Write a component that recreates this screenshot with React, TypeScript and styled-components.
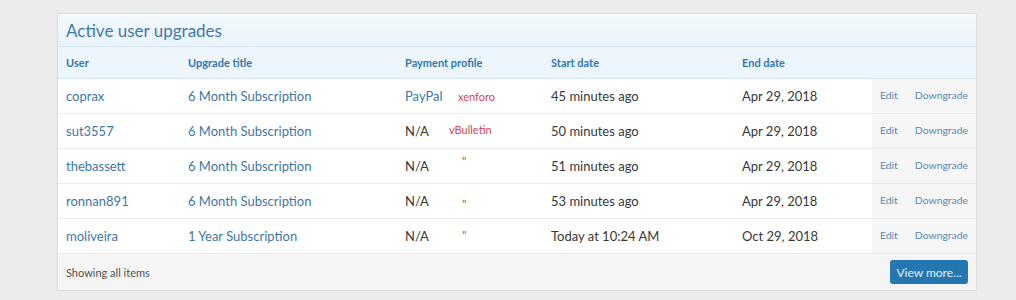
import React from 'react'
import styled, { createGlobalStyle } from 'styled-components'

const GlobalStyle = createGlobalStyle`
  html, body {
    margin: 0;
    padding: 0;
    background: #ececec;
    font-family: "Segoe UI", Lato, "Liberation Sans", sans-serif;
  }
`

type Note = { text: string; x: number; y: number; size?: number }

type Upgrade = {
  user: string
  title: string
  profile: string
  profileLink: boolean
  start: string
  end: string
  note: Note
}

const rows: Upgrade[] = [
  { user: 'coprax', title: '6 Month Subscription', profile: 'PayPal', profileLink: true, start: '45 minutes ago', end: 'Apr 29, 2018', note: { text: 'xenforo', x: 61, y: 12 } },
  { user: 'sut3557', title: '6 Month Subscription', profile: 'N/A', profileLink: false, start: '50 minutes ago', end: 'Apr 29, 2018', note: { text: 'vBulletin', x: 52, y: 10 } },
  { user: 'thebassett', title: '6 Month Subscription', profile: 'N/A', profileLink: false, start: '51 minutes ago', end: 'Apr 29, 2018', note: { text: '"', x: 65, y: 6, size: 12 } },
  { user: 'ronnan891', title: '6 Month Subscription', profile: 'N/A', profileLink: false, start: '53 minutes ago', end: 'Apr 29, 2018', note: { text: '"', x: 65, y: 14, size: 12 } },
  { user: 'moliveira', title: '1 Year Subscription', profile: 'N/A', profileLink: false, start: 'Today at 10:24 AM', end: 'Oct 29, 2018', note: { text: '"', x: 65, y: 10, size: 12 } },
]

const App: React.FC = () => {
  return (
    <>
      <GlobalStyle />
      <Page>
        <Panel>
          <PanelTitle>Active user upgrades</PanelTitle>
          <Table>
            <colgroup>
              <col style={{ width: 122 }} />
              <col style={{ width: 217 }} />
              <col style={{ width: 146 }} />
              <col style={{ width: 191 }} />
              <col style={{ width: 138 }} />
              <col />
            </colgroup>
            <thead>
              <tr>
                <Th>User</Th>
                <Th>Upgrade title</Th>
                <Th>Payment profile</Th>
                <Th>Start date</Th>
                <Th>End date</Th>
                <Th />
              </tr>
            </thead>
            <tbody>
              {rows.map((r) => (
                <Row key={r.user}>
                  <Td><Link>{r.user}</Link></Td>
                  <Td><Link>{r.title}</Link></Td>
                  <ProfileCell>
                    {r.profileLink ? <Link>{r.profile}</Link> : r.profile}
                    <Annotation $x={r.note.x} $y={r.note.y} $size={r.note.size}>{r.note.text}</Annotation>
                  </ProfileCell>
                  <Td>{r.start}</Td>
                  <Td>{r.end}</Td>
                  <ActionCell>
                    <SmallLink>Edit</SmallLink>
                    <SmallLink>Downgrade</SmallLink>
                  </ActionCell>
                </Row>
              ))}
            </tbody>
          </Table>
          <Footer>
            <FooterText>Showing all items</FooterText>
            <Button>View more...</Button>
          </Footer>
        </Panel>
      </Page>
    </>
  )
}

const Page = styled.div`
  padding: 13px 0 0 57px;
  width: 920px;
`

const Panel = styled.div`
  background: #fff;
  border: 1px solid #dcdcdc;
  border-radius: 3px;
  box-shadow: 0 1px 2px rgba(0, 0, 0, 0.06);
  overflow: hidden;
`

const PanelTitle = styled.h2`
  margin: 0;
  height: 32px;
  padding: 0 8px;
  display: flex;
  align-items: center;
  font-size: 17px;
  font-weight: 400;
  color: #3f7aa8;
  background: linear-gradient(to bottom, #f3f9fd, #e9f4fc);
  border-bottom: 1px solid #dbe8f4;
`

const Table = styled.table`
  width: 100%;
  border-collapse: collapse;
  table-layout: fixed;
`

const Th = styled.th`
  height: 31px;
  padding: 0 8px;
  text-align: left;
  font-size: 11px;
  font-weight: 700;
  color: #3276ad;
  background: #edf6fd;
  border-bottom: 1px solid #d8e4ee;
`

const Row = styled.tr`
  height: 35px;
  border-bottom: 1px solid #ebebeb;
`

const Td = styled.td`
  padding: 0 8px;
  font-size: 13px;
  color: #383838;
  white-space: nowrap;
`

const ProfileCell = styled(Td)`
  position: relative;
`

const Annotation = styled.span<{ $x: number; $y: number; $size?: number }>`
  position: absolute;
  left: ${(p) => p.$x}px;
  top: ${(p) => p.$y}px;
  font-size: ${(p) => p.$size ?? 11}px;
  line-height: 1;
  color: #d6434a;
`

const ActionCell = styled.td`
  background: #f6f6f6;
  padding: 0 8px 2px;
  font-size: 10.4px;
  line-height: 1;
  white-space: nowrap;
`

const Link = styled.span`
  color: #3d77a8;
`

const SmallLink = styled.span`
  color: #5a86ae;
  & + & {
    margin-left: 17px;
  }
`

const Footer = styled.div`
  height: 36px;
  padding: 0 8px;
  display: flex;
  align-items: center;
  justify-content: space-between;
  background: #f5f5f5;
`

const FooterText = styled.span`
  font-size: 11px;
  color: #505050;
`

const Button = styled.button`
  height: 24px;
  width: 78px;
  padding: 0;
  border: none;
  border-radius: 3px;
  background: #2577b1;
  color: #e6f0f8;
  font-family: inherit;
  font-size: 12px;
`

export default App
